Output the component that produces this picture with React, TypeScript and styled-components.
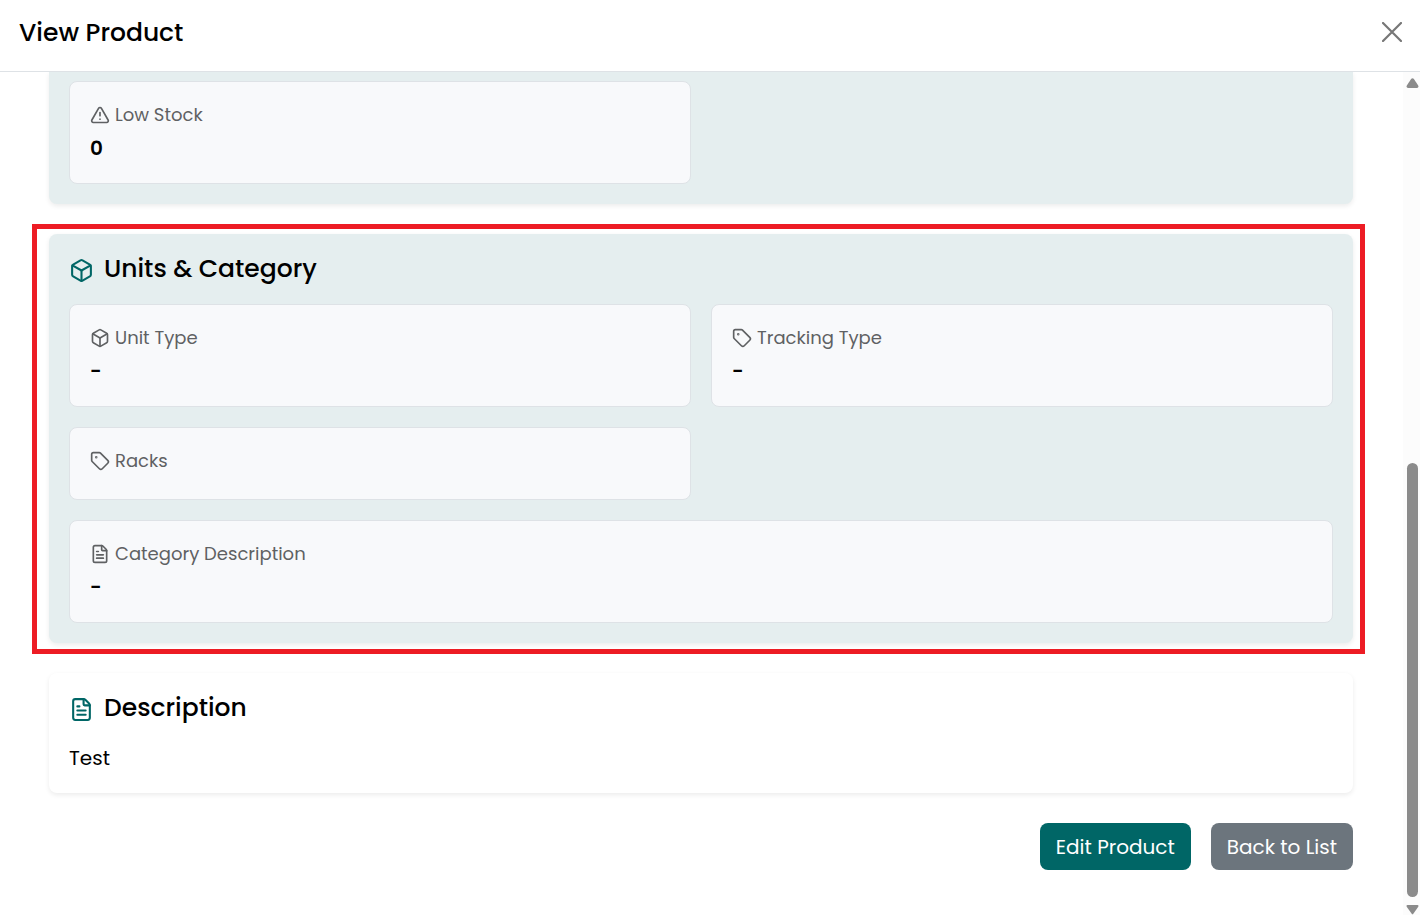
import React from 'react';
import styled, { createGlobalStyle, css } from 'styled-components';
import { Box, FileText, Tag, TriangleAlert, type LucideIcon } from 'lucide-react';

const GlobalStyle = createGlobalStyle`
  *, *::before, *::after { box-sizing: border-box; }
  body {
    margin: 0;
    background: #fff;
    color: #000;
    font-family: Poppins, Inter, sans-serif;
    font-size: 20px;
    line-height: 30px;
  }
`;

const Modal = styled.div`
  display: flex;
  flex-direction: column;
  height: 100vh;
  overflow: hidden;
`;

const Header = styled.header`
  display: flex;
  align-items: center;
  justify-content: space-between;
  flex: none;
  padding: 16px 14px 21px 19px;
  border-bottom: 1px solid #dee2e6;
`;

const Title = styled.h1`
  margin: 0;
  font-size: 25px;
  font-weight: 500;
  line-height: 34px;
`;

const CloseButton = styled.button`
  display: flex;
  padding: 4px 4px 6px;
  border: 0;
  background: none;
  color: #777;
  cursor: pointer;
`;

const Body = styled.div`
  display: flex;
  flex: 1;
  min-height: 0;
`;

const Content = styled.main`
  display: flex;
  flex: 1;
  flex-direction: column;
  gap: 30px;
  min-width: 0;
  padding: 0 50px 0 49px;
  overflow: hidden;
`;

const Panel = styled.section<{ $tinted?: boolean; $continued?: boolean }>`
  position: relative;
  flex: none;
  padding: 20px;
  border-radius: 8px;
  background: ${(p) => (p.$tinted ? '#e5eeef' : '#fff')};
  box-shadow: 0 2px 5px rgba(0, 0, 0, 0.08);
  ${(p) =>
    p.$continued &&
    css`
      padding-top: 9px;
      border-top-left-radius: 0;
      border-top-right-radius: 0;
    `}
`;

const Highlight = styled.div`
  position: absolute;
  inset: -10px -12px -11px -17px;
  border: 5px solid #ed1c24;
  pointer-events: none;
`;

const PanelTitle = styled.h2`
  display: flex;
  align-items: center;
  gap: 10px;
  margin: 0 0 20px;
  font-size: 25px;
  font-weight: 500;
  line-height: 30px;

  svg {
    margin-top: 2px;
    color: #006666;
  }
`;

const Fields = styled.dl`
  display: grid;
  grid-template-columns: 1fr 1fr;
  gap: 20px;
  margin: 0;
`;

const FieldCard = styled.div<{ $wide?: boolean }>`
  grid-column: ${(p) => (p.$wide ? '1 / -1' : 'auto')};
  padding: 20px;
  border: 1px solid #dee2e6;
  border-radius: 8px;
  background: #f8f9fb;
`;

const FieldLabel = styled.dt`
  display: flex;
  align-items: center;
  gap: 5px;
  margin-bottom: 5px;
  color: #5f6163;
  font-size: 18px;
  line-height: 26px;
`;

const FieldValue = styled.dd`
  margin: 0;
  font-weight: 600;
`;

const Text = styled.p`
  margin: 0;
`;

const Actions = styled.div`
  display: flex;
  justify-content: flex-end;
  gap: 20px;
`;

const Button = styled.button<{ $primary?: boolean }>`
  padding: 9px 16px 8px;
  border: 0;
  border-radius: 8px;
  background: ${(p) => (p.$primary ? '#006666' : '#6c757d')};
  color: #fff;
  font: inherit;
  cursor: pointer;
`;

const Rail = styled.div`
  display: flex;
  flex: none;
  flex-direction: column;
  align-items: center;
  width: 17px;
  padding: 6px 0 0 2px;
  background: #fcfcfc;
  color: #8b8b8b;

  svg {
    flex: none;
  }
`;

const Track = styled.div`
  display: flex;
  flex: 1;
  flex-direction: column;
  justify-content: flex-end;
  margin: 5px 0 8px;
`;

const Thumb = styled.div`
  width: 11px;
  height: 54%;
  border-radius: 6px;
  background: #8b8b8b;
`;

type FieldProps = { icon: LucideIcon; label: string; value?: string; wide?: boolean };

function Field({ icon: Icon, label, value, wide }: FieldProps) {
  return (
    <FieldCard $wide={wide}>
      <FieldLabel>
        <Icon size={20} aria-hidden />
        {label}
      </FieldLabel>
      {value && <FieldValue>{value}</FieldValue>}
    </FieldCard>
  );
}

export default function App() {
  return (
    <>
      <GlobalStyle />
      <Modal>
        <Header>
          <Title>View Product</Title>
          <CloseButton type="button" aria-label="Close">
            <svg width="20" height="20" viewBox="0 0 20 20" fill="none" stroke="currentColor" strokeWidth="2.2" strokeLinecap="round">
              <path d="M1 1L19 19M19 1L1 19" />
            </svg>
          </CloseButton>
        </Header>
        <Body>
          <Content>
            <Panel $tinted $continued>
              <Fields>
                <Field icon={TriangleAlert} label="Low Stock" value="0" />
              </Fields>
            </Panel>
            <Panel $tinted>
              <PanelTitle>
                <Box size={25} aria-hidden />
                Units &amp; Category
              </PanelTitle>
              <Fields>
                <Field icon={Box} label="Unit Type" value="-" />
                <Field icon={Tag} label="Tracking Type" value="-" />
                <Field icon={Tag} label="Racks" />
                <Field icon={FileText} label="Category Description" value="-" wide />
              </Fields>
              <Highlight />
            </Panel>
            <Panel>
              <PanelTitle>
                <FileText size={25} aria-hidden />
                Description
              </PanelTitle>
              <Text>Test</Text>
            </Panel>
            <Actions>
              <Button type="button" $primary>Edit Product</Button>
              <Button type="button">Back to List</Button>
            </Actions>
          </Content>
          <Rail aria-hidden>
            <svg width="13" height="10" viewBox="0 0 13 10" fill="currentColor">
              <path d="M5.3 .8Q6.5 -.4 7.7 .8L12.2 7.4Q13 9.8 11 10H2Q0 9.8 .8 7.4Z" />
            </svg>
            <Track>
              <Thumb />
            </Track>
            <svg width="13" height="10" viewBox="0 0 13 10" fill="currentColor">
              <path d="M1.4 0H11.6Q13 .3 12.3 1.8L7.3 8.8Q6.5 9.8 5.7 8.8L.7 1.8Q0 .3 1.4 0Z" />
            </svg>
          </Rail>
        </Body>
      </Modal>
    </>
  );
}
